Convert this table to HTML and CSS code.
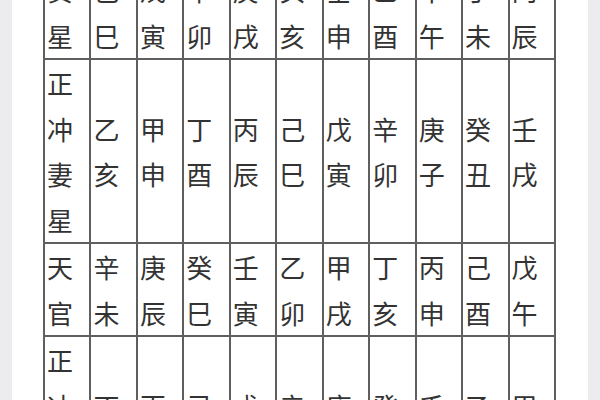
FILE: index.html
```html
<!DOCTYPE html>
<html lang="zh">
<head>
<meta charset="utf-8">
<link rel="stylesheet" href="styles.css">
</head>
<body>
<div class="page">
  <table class="grid">
    <colgroup>
      <col><col><col><col><col><col><col><col><col><col><col>
    </colgroup>
    <tr>
      <td>贵<br>星</td>
      <td>己<br>巳</td><td>戊<br>寅</td><td>辛<br>卯</td><td>庚<br>戌</td><td>癸<br>亥</td>
      <td>壬<br>申</td><td>乙<br>酉</td><td>甲<br>午</td><td>丁<br>未</td><td>丙<br>辰</td>
    </tr>
    <tr>
      <td>正<br>冲<br>妻<br>星</td>
      <td>乙<br>亥</td><td>甲<br>申</td><td>丁<br>酉</td><td>丙<br>辰</td><td>己<br>巳</td>
      <td>戊<br>寅</td><td>辛<br>卯</td><td>庚<br>子</td><td>癸<br>丑</td><td>壬<br>戌</td>
    </tr>
    <tr>
      <td>天<br>官</td>
      <td>辛<br>未</td><td>庚<br>辰</td><td>癸<br>巳</td><td>壬<br>寅</td><td>乙<br>卯</td>
      <td>甲<br>戌</td><td>丁<br>亥</td><td>丙<br>申</td><td>己<br>酉</td><td>戊<br>午</td>
    </tr>
    <tr>
      <td>正<br>冲<br>天<br>官</td>
      <td>丁<br>丑</td><td>丙<br>戌</td><td>己<br>亥</td><td>戊<br>申</td><td>辛<br>酉</td>
      <td>庚<br>辰</td><td>癸<br>巳</td><td>壬<br>寅</td><td>乙<br>卯</td><td>甲<br>子</td>
    </tr>
  </table>
</div>
</body>
</html>
```
FILE: styles.css
```css
html, body {
  margin: 0;
  padding: 0;
}
body {
  background: #ececef;
  font-family: "Noto Sans CJK SC", "Noto Sans CJK TC", sans-serif;
  color: #333;
}
.page {
  margin: 0 12px;
  height: 400px;
  overflow: hidden;
  background: #fff;
  padding-left: 31px;
}
.grid {
  border-collapse: collapse;
  table-layout: fixed;
  width: 513px;
  margin-top: -35px;
}
.grid td {
  border: 2px solid #5f5f5f;
  padding: 0 2px;
  font-size: 26px;
  line-height: 45.5px;
  vertical-align: middle;
  text-align: left;
  white-space: nowrap;
}
```
